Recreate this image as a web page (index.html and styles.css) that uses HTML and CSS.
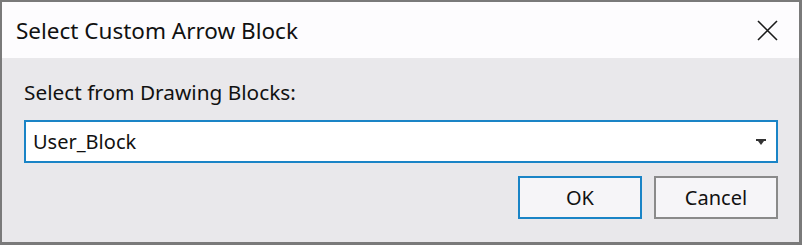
FILE: index.html
```html
<!DOCTYPE html>
<html>
<head>
<meta charset="utf-8">
<link rel="stylesheet" href="styles.css">
</head>
<body>
<div class="dialog">
  <div class="titlebar">
    <span class="title">Select Custom Arrow Block</span>
    <span class="close">
      <svg width="21" height="21" viewBox="0 0 21 21"><path d="M1 1 L20 20 M20 1 L1 20" stroke="#1a1a1a" stroke-width="1.6" fill="none"/></svg>
    </span>
  </div>
  <div class="content">
    <div class="label">Select from Drawing Blocks:</div>
    <div class="combo">
      <span class="combo-text">User_Block</span>
      <svg class="arrow" width="10" height="7" viewBox="0 0 10 7"><path d="M0 0 H10 V2 H8 L5 6 L2 2 H0 Z" fill="#333"/></svg>
    </div>
    <div class="buttons">
      <div class="btn btn-default">OK</div>
      <div class="btn">Cancel</div>
    </div>
  </div>
</div>
</body>
</html>
```

FILE: styles.css
```css
* { box-sizing: border-box; }
html, body { margin: 0; padding: 0; }
body {
  width: 802px;
  height: 245px;
  font-family: "Noto Sans", "Open Sans", sans-serif;
  color: #111;
}
.dialog {
  width: 802px;
  height: 245px;
  border-style: solid;
  border-color: #7a7a7a;
  border-width: 2px 3px 3px 2px;
  background: #e9e8eb;
  display: flex;
  flex-direction: column;
}
.titlebar {
  height: 56px;
  background: #fdfcfe;
  display: flex;
  align-items: center;
  justify-content: space-between;
  padding: 0 21px 0 14px;
}
.title {
  font-size: 22.5px;
  color: #111;
}
.close { display: flex; width: 21px; height: 21px; }
.content {
  padding: 21px 21px 0 22px;
  display: flex;
  flex-direction: column;
}
.label {
  font-size: 20.8px;
  line-height: 26px;
  height: 26px;
}
.combo {
  margin-top: 15px;
  height: 43px;
  background: #fff;
  border: 2px solid #1a84c6;
  display: flex;
  align-items: center;
  justify-content: space-between;
  padding: 0 10px 0 7px;
}
.combo-text { font-size: 20px; }
.arrow { margin-top: 1px; }
.buttons {
  margin-top: 13px;
  display: flex;
  justify-content: flex-end;
  gap: 12px;
}
.btn {
  width: 124px;
  height: 43px;
  background: #f6f5f8;
  border: 2px solid #8a8a8a;
  display: flex;
  align-items: center;
  justify-content: center;
  font-size: 20px;
}
.btn-default { border-color: #1a84c6; }
```
